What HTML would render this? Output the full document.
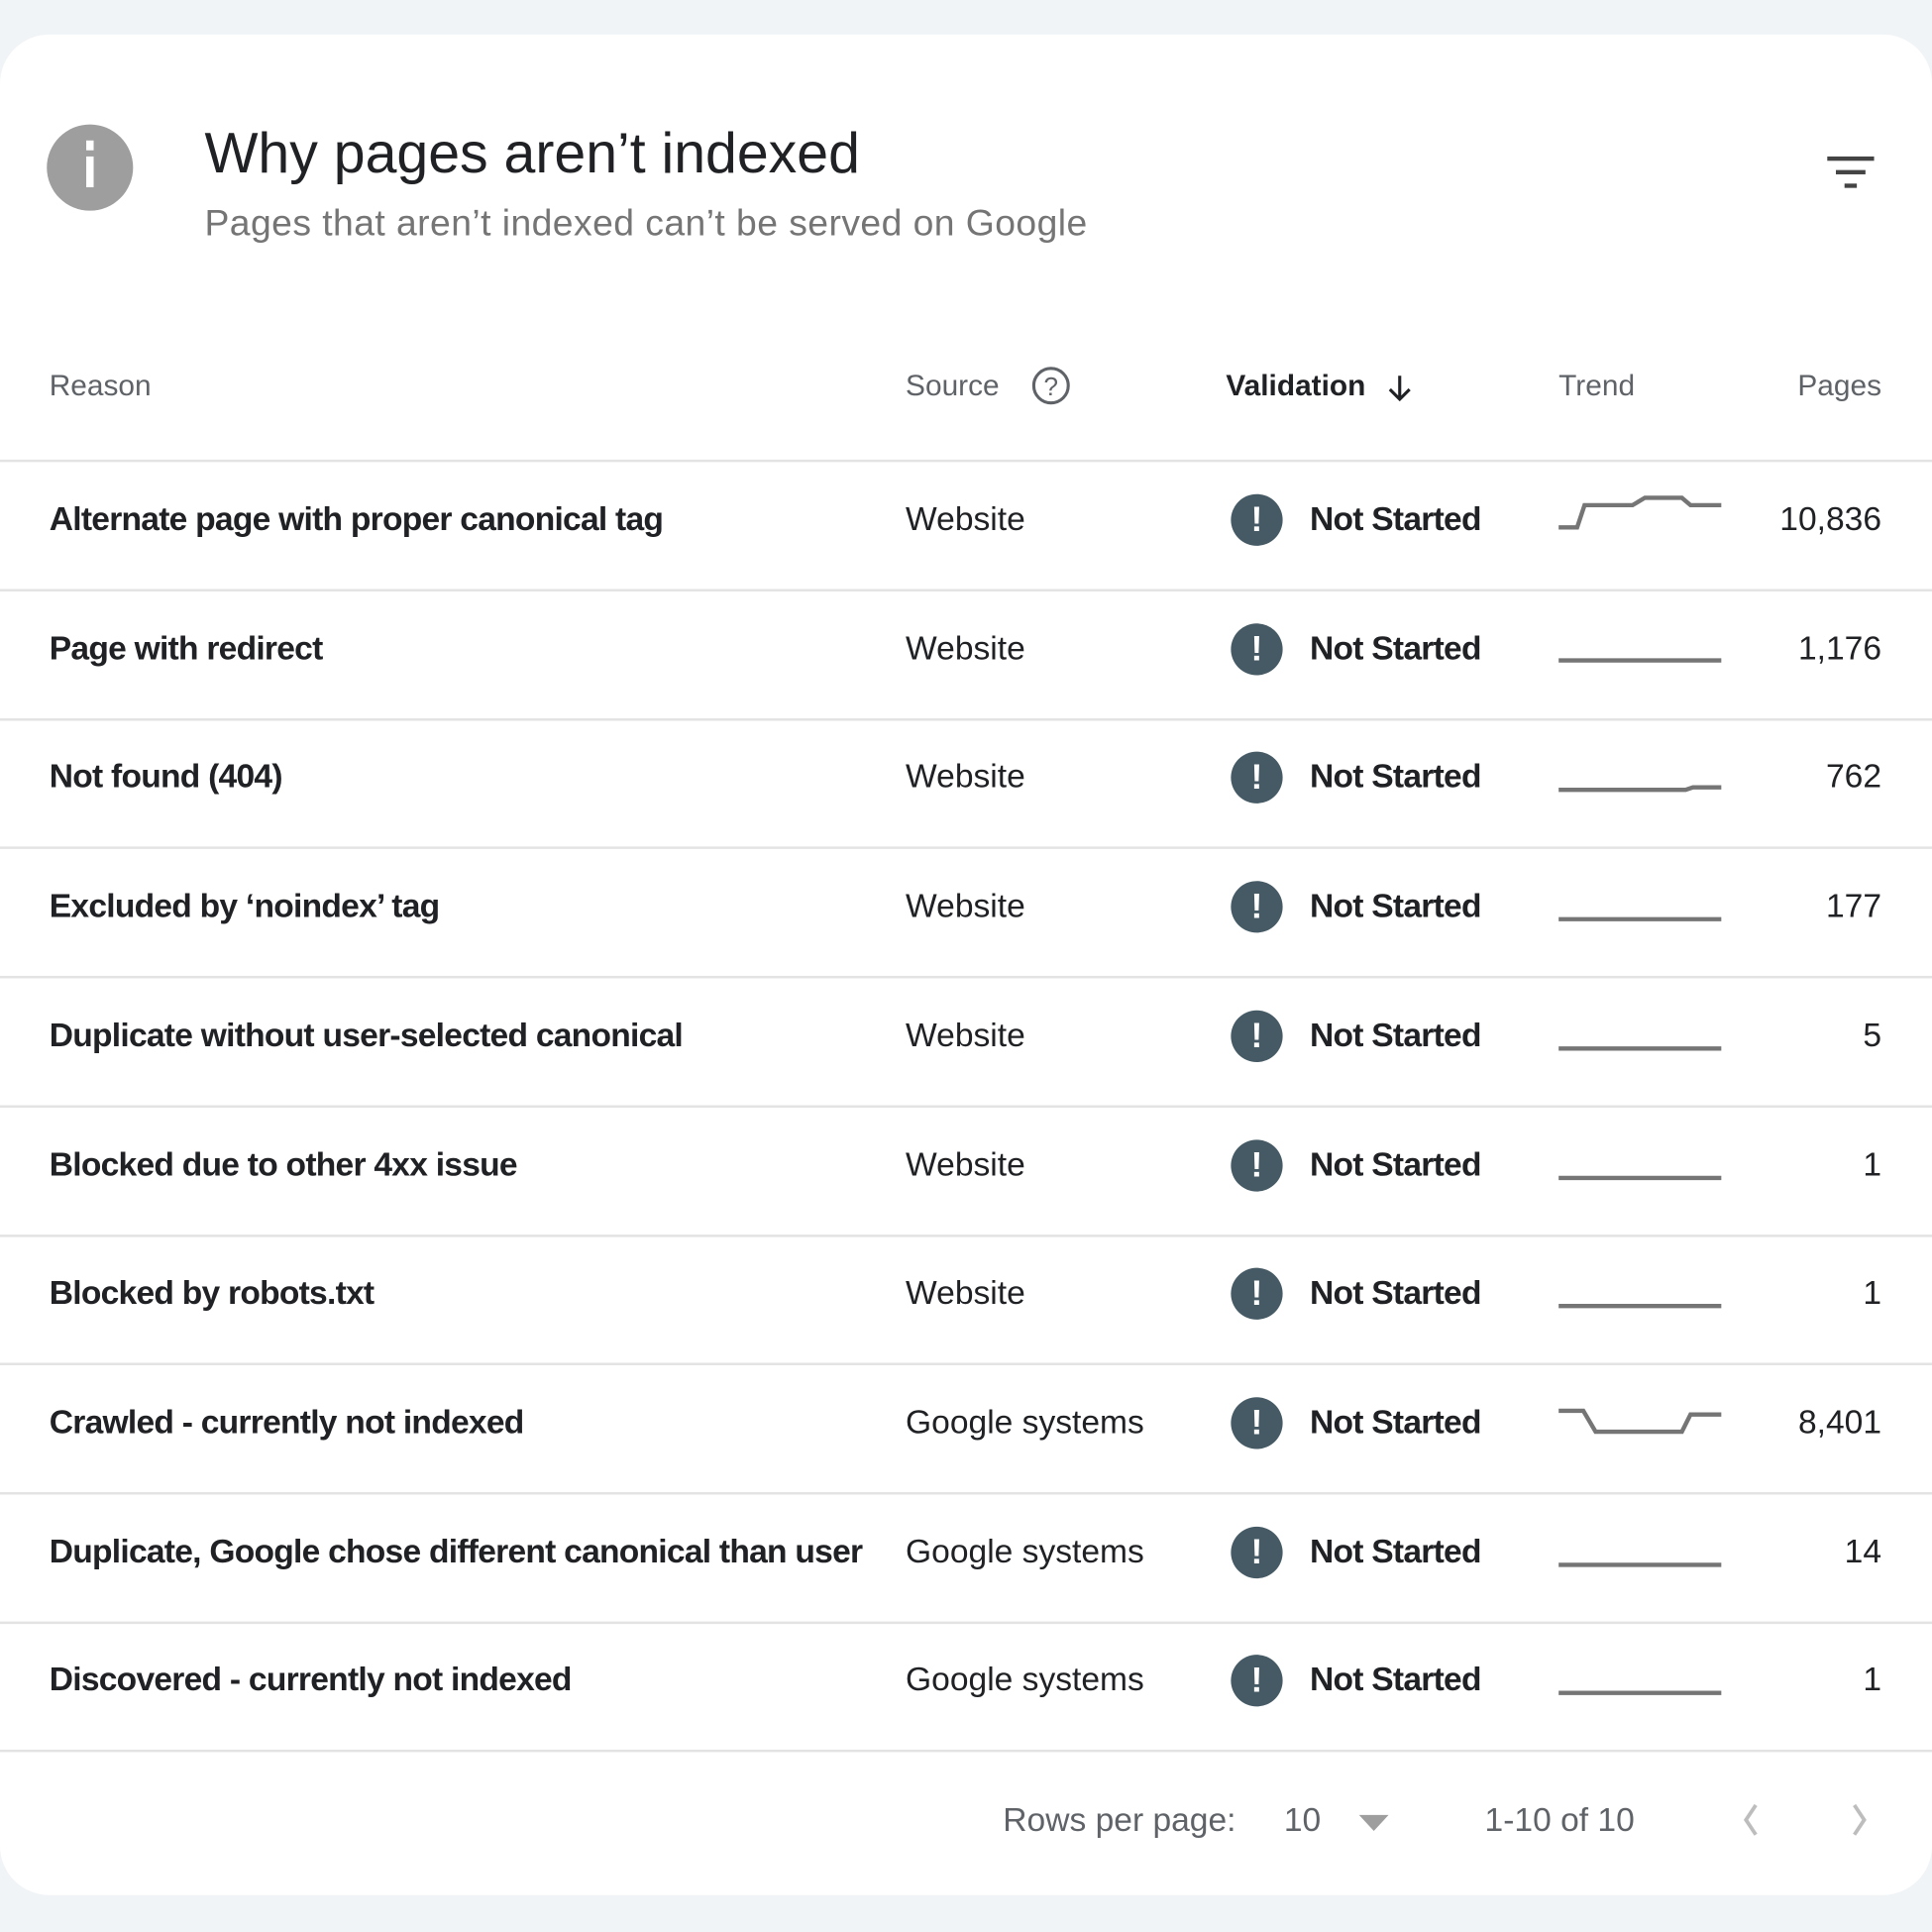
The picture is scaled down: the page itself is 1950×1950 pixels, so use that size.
<!DOCTYPE html>
<html><head><meta charset="utf-8"><style>
html,body{margin:0;padding:0;background:#f1f4f7;width:1950px;height:1950px;overflow:hidden}
#w{position:absolute;left:0;top:0;width:1568px;height:1568px;transform:scale(1.24362);transform-origin:0 0;font-family:"Liberation Sans",Arial,sans-serif}
.card{position:absolute;left:0;top:28px;width:1568px;height:1510px;background:#fff;border-radius:40px 40px 40px 40px}
.t{position:absolute;white-space:nowrap}
.line{position:absolute;left:0;width:1568px;height:2px;background:#e3e3e3}
.r{font-size:27px;color:#202124;font-weight:bold;letter-spacing:-0.6px}
.s{font-size:27px;color:#202124}
.ns{font-size:27px;color:#202124;font-weight:bold;letter-spacing:-0.6px}
.p{font-size:27px;color:#202124;right:41px;text-align:right}
.ic{position:absolute;left:999px;width:42px;height:42px;border-radius:50%;background:#455a64;color:#fff;font-weight:bold;font-size:28px;text-align:center;line-height:42px}
.h{font-size:24px;color:#5f6368;top:300px}
</style></head><body><div id="w">
<div class="card"></div>
<div style="position:absolute;left:38px;top:101px;width:70px;height:70px;border-radius:50%;background:#9e9e9e"></div>
<div style="position:absolute;left:70px;top:114px;width:6px;height:8px;background:#fff"></div>
<div style="position:absolute;left:70px;top:127px;width:6px;height:25px;background:#fff"></div>
<div class="t" style="left:166px;top:97px;font-size:46px;color:#202124">Why pages aren’t indexed</div>
<div class="t" style="left:166px;top:165px;font-size:30px;color:#757575;letter-spacing:0.35px">Pages that aren’t indexed can’t be served on Google</div>
<svg style="position:absolute;left:1480px;top:124px" width="44" height="34"><rect x="3" y="3" width="38" height="3.5" fill="#444"/><rect x="10" y="14" width="24" height="3.5" fill="#444"/><rect x="17" y="25" width="10" height="3.5" fill="#444"/></svg>
<div class="t h" style="left:40px">Reason</div>
<div class="t h" style="left:735px">Source</div>
<svg style="position:absolute;left:836px;top:296px" width="34" height="34"><circle cx="17" cy="17" r="14" fill="none" stroke="#5f6368" stroke-width="2.5"/><text x="17" y="25" font-size="21" text-anchor="middle" fill="#5f6368" font-family="Liberation Sans">?</text></svg>
<div class="t h" style="left:995px;color:#202124;font-weight:bold">Validation</div>
<svg style="position:absolute;left:1124px;top:302px" width="26" height="26"><path d="M12 3 V22 M4 14 L12 22 L20 14" fill="none" stroke="#202124" stroke-width="2.5"/></svg>
<div class="t h" style="left:1265px">Trend</div>
<div class="t h" style="right:41px">Pages</div>
<div class="line" style="top:373px"></div>
<div id="rows"></div>
<svg style="position:absolute;left:0;top:0" width="1568" height="1568">
<g fill="none" stroke="#757575" stroke-width="3.5">
<path d="M1265 428 H1280 L1286 410 H1325 L1335 404 H1365 L1372 410 H1397"/>
<path d="M1265 536 H1397"/>
<path d="M1265 641 H1368 L1374 639 H1397"/>
<path d="M1265 746 H1397"/>
<path d="M1265 851 H1397"/>
<path d="M1265 956 H1397"/>
<path d="M1265 1060 H1397"/>
<path d="M1265 1145 H1285 L1295 1162 H1365 L1372 1148 H1397"/>
<path d="M1265 1270 H1397"/>
<path d="M1265 1374 H1397"/>
</g></svg>
<div class="t" style="left:814px;top:1462px;font-size:27px;color:#5f6368">Rows per page:</div>
<div class="t" style="left:1042px;top:1462px;font-size:27px;color:#5f6368">10</div>
<svg style="position:absolute;left:1100px;top:1470px" width="30" height="20"><path d="M3 3 H27 L15 16Z" fill="#9e9e9e"/></svg>
<div class="t" style="left:1205px;top:1462px;font-size:27px;color:#5f6368">1-10 of 10</div>
<svg style="position:absolute;left:1405px;top:1460px" width="120" height="34"><path d="M20 5 L12 17 L20 29" fill="none" stroke="#bdbdbd" stroke-width="3"/><path d="M100 5 L108 17 L100 29" fill="none" stroke="#bdbdbd" stroke-width="3"/></svg>
</div>
<script>
var d=[["Alternate page with proper canonical tag","Website","10,836"],["Page with redirect","Website","1,176"],["Not found (404)","Website","762"],["Excluded by ‘noindex’ tag","Website","177"],["Duplicate without user-selected canonical","Website","5"],["Blocked due to other 4xx issue","Website","1"],["Blocked by robots.txt","Website","1"],["Crawled - currently not indexed","Google systems","8,401"],["Duplicate, Google chose different canonical than user","Google systems","14"],["Discovered - currently not indexed","Google systems","1"]];
var h="";for(var i=0;i<10;i++){var c=422+i*104.7,t=c-16;
h+='<div class="t r" style="left:40px;top:'+t+'px">'+d[i][0]+'</div><div class="t s" style="left:735px;top:'+t+'px">'+d[i][1]+'</div><div class="ic" style="top:'+(c-21)+'px">!</div><div class="t ns" style="left:1063px;top:'+t+'px">Not Started</div><div class="t p" style="top:'+t+'px">'+d[i][2]+'</div><div class="line" style="top:'+(c+56)+'px"></div>';}
document.getElementById("rows").outerHTML=h;
</script>
</body></html>
